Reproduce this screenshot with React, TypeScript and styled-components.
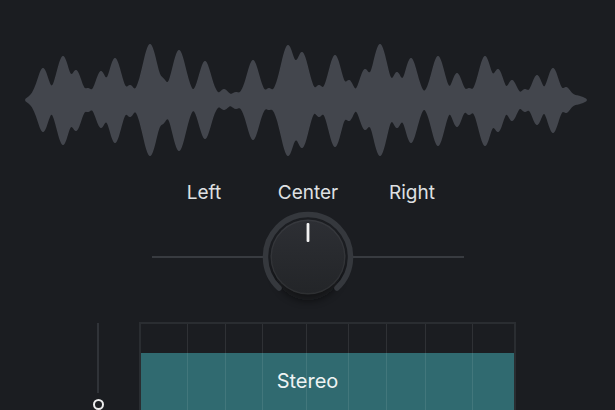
import React from "react";
import styled, { createGlobalStyle } from "styled-components";

const GlobalStyle = createGlobalStyle`
  html, body { margin: 0; padding: 0; background: #1b1d21; }
  body { font-family: Inter, "Open Sans", "DejaVu Sans", sans-serif; }
`;

const Page = styled.div`
  width: 615px;
  height: 410px;
  overflow: hidden;
  background: #1b1d21;
  display: flex;
  flex-direction: column;
`;

const WaveSvg = styled.svg`
  display: block;
  flex: none;
  width: 615px;
  height: 182px;
`;

const LabelRow = styled.div`
  display: grid;
  grid-template-columns: repeat(3, 104px);
  margin-left: 152px;
  height: 22px;
  line-height: 22px;
  font-size: 19px;
  color: #dfe0e2;
`;

const Label = styled.span`
  text-align: center;
`;

const KnobRow = styled.div`
  display: flex;
  align-items: center;
  width: 312px;
  height: 90px;
  margin-left: 152px;
  margin-top: 8px;
`;

const Track = styled.div`
  flex: 1;
  height: 2px;
  background: #383b40;
`;

const KnobSvg = styled.svg`
  display: block;
  flex: none;
  width: 90px;
  height: 90px;
  overflow: visible;
`;

const Bottom = styled.div`
  display: flex;
  align-items: flex-start;
  margin-top: 20px;
  padding-left: 92px;
`;

const SliderCol = styled.div`
  width: 12px;
  display: flex;
  flex-direction: column;
  align-items: center;
  gap: 6px;
  padding-top: 1px;
`;

const SliderLine = styled.div`
  width: 2px;
  height: 70px;
  background: #303338;
`;

const Handle = styled.div`
  width: 11px;
  height: 11px;
  box-sizing: border-box;
  border: 2px solid #ececec;
  border-radius: 50%;
`;

const Grid = styled.div`
  position: relative;
  box-sizing: border-box;
  width: 377px;
  height: 100px;
  margin-left: 35px;
  padding-top: 29px;
  border: 2px solid #2a2d31;
  border-bottom: none;
`;

const Band = styled.div`
  height: 80px;
  box-sizing: border-box;
  background: #306a70;
  display: flex;
  justify-content: center;
  padding-right: 40px;
  padding-top: 17px;
  font-size: 20px;
  line-height: 22px;
  color: #eef3f3;
`;

const GridLines = styled.div<{ $cols: string }>`
  position: absolute;
  inset: 0;
  display: grid;
  grid-template-columns: ${(p) => p.$cols};
  pointer-events: none;
`;

const GridCell = styled.div`
  border-right: 1px solid rgba(255, 255, 255, 0.09);
  &:last-child { border-right: none; }
`;

const PEAKS: [number, number, number][] = [
  [43, 32, 32], [63, 44, 45], [76, 30, 31], [88, 12, 12], [101, 29, 28],
  [115, 42, 43], [130, 15, 17], [150, 56, 56], [163, 21, 23], [179, 50, 51],
  [205, 39, 39], [224, 11, 10], [236, 8, 9], [253, 40, 40], [269, 12, 10],
  [288, 55, 56], [302, 48, 48], [319, 15, 17], [335, 45, 47], [349, 20, 21],
  [365, 31, 30], [380, 56, 56], [397, 28, 28], [411, 42, 43], [438, 44, 46],
  [457, 27, 27], [469, 12, 15], [485, 44, 46], [498, 31, 32], [512, 20, 21],
  [525, 11, 12], [537, 25, 25], [553, 32, 33], [566, 13, 13],
];

const X0 = 25;
const X1 = 587;
const CY = 100;
const BASE = 4.5;
const clamp = (v: number) => Math.max(0, Math.min(1, v));
const base = (x: number) =>
  BASE * Math.sqrt(clamp((x - X0) / 9)) * Math.sqrt(clamp((X1 - x) / 9));

const env = (x: number, side: 1 | 2) => {
  let s = 0;
  for (const p of PEAKS) {
    const amp = Math.max(0, p[side] - BASE);
    const sig = 3.4 + amp * 0.075;
    const g = amp * Math.exp(-((x - p[0]) ** 2) / (2 * sig * sig));
    s += g * g * g;
  }
  return base(x) + Math.cbrt(s);
};

const buildWave = () => {
  const top: string[] = [];
  const bot: string[] = [];
  for (let x = X0; x <= X1; x += 0.5) {
    top.push(`${x.toFixed(1)},${(CY - env(x, 1)).toFixed(2)}`);
    bot.push(`${x.toFixed(1)},${(CY + env(x, 2)).toFixed(2)}`);
  }
  bot.reverse();
  return `M${top.join(" L")} L${bot.join(" L")} Z`;
};

const WAVE = buildWave();

const COLS = [47, 38, 37, 44, 42, 38, 39, 47, 41];

const polar = (r: number, deg: number) => {
  const t = (deg * Math.PI) / 180;
  return [45 + r * Math.sin(t), 45 - r * Math.cos(t)];
};

const Knob: React.FC = () => {
  const [sx, sy] = polar(42.5, -137);
  const [ex, ey] = polar(42.5, 137);
  return (
    <KnobSvg viewBox="0 0 90 90">
      <defs>
        <filter id="kshadow" x="-50%" y="-50%" width="200%" height="200%">
          <feGaussianBlur stdDeviation="4" />
        </filter>
        <linearGradient id="kbody" x1="0" y1="0" x2="0" y2="1">
          <stop offset="0" stopColor="#2d2f34" />
          <stop offset="1" stopColor="#232528" />
        </linearGradient>
      </defs>
      <ellipse cx="45" cy="57" rx="33" ry="31" fill="#0c0d0f" opacity="0.6" filter="url(#kshadow)" />
      <path
        d={`M${sx} ${sy} A42.5 42.5 0 1 1 ${ex} ${ey}`}
        fill="none"
        stroke="#35383d"
        strokeWidth="5.5"
        strokeLinecap="round"
      />
      <circle cx="45" cy="45" r="37.5" fill="url(#kbody)" />
      <circle cx="45" cy="45" r="36.8" fill="none" stroke="rgba(255,255,255,0.05)" strokeWidth="1.4" />
      <rect x="43.6" y="11" width="2.8" height="19" rx="1" fill="#f2f2f2" />
    </KnobSvg>
  );
};

export default function App() {
  return (
    <Page>
      <GlobalStyle />
      <WaveSvg viewBox="0 0 615 182">
        <path d={WAVE} fill="#43464d" />
      </WaveSvg>
      <LabelRow>
        <Label>Left</Label>
        <Label>Center</Label>
        <Label>Right</Label>
      </LabelRow>
      <KnobRow>
        <Track />
        <Knob />
        <Track />
      </KnobRow>
      <Bottom>
        <SliderCol>
          <SliderLine />
          <Handle />
        </SliderCol>
        <Grid>
          <Band>Stereo</Band>
          <GridLines $cols={COLS.map((c) => `${c}px`).join(" ")}>
            {COLS.map((_, i) => (
              <GridCell key={i} />
            ))}
          </GridLines>
        </Grid>
      </Bottom>
    </Page>
  );
}
